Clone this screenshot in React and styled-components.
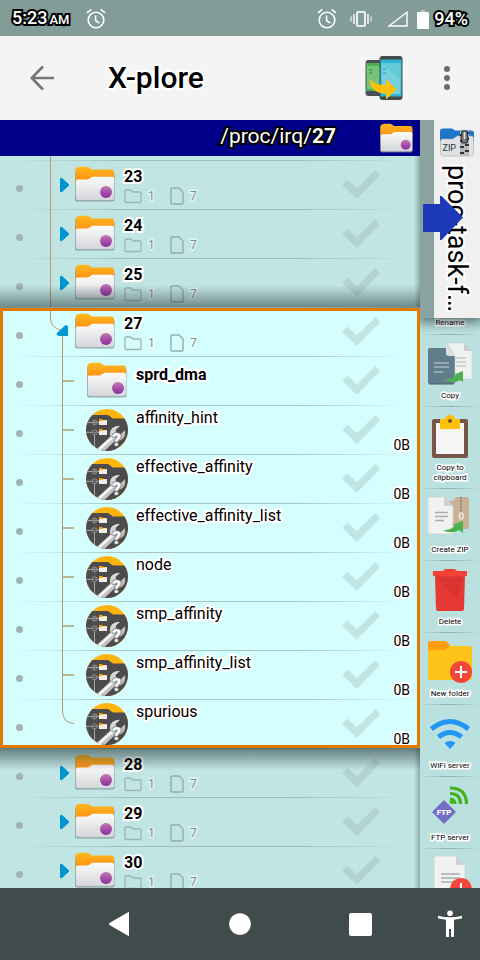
import React from "react";
import styled, { createGlobalStyle, css } from "styled-components";

const GlobalStyle = createGlobalStyle`
  *, *::before, *::after { box-sizing: border-box; }
  body { margin: 0; font-family: Roboto, "Noto Sans", sans-serif; color: #000; }
  button { border: 0; padding: 0; margin: 0; background: none; font: inherit; color: inherit; cursor: pointer; }
  svg { display: block; flex: none; }
  ul { list-style: none; margin: 0; padding: 0; }
`;

const whiteHalo = css`
  -webkit-text-stroke: 4px #fff;
  paint-order: stroke fill;
`;
const blackHalo = css`
  color: #fff;
  -webkit-text-stroke: 4px #000;
  paint-order: stroke fill;
`;

const Screen = styled.div`
  height: 100vh;
  display: flex;
  flex-direction: column;
  overflow: hidden;
`;

const StatusBar = styled.header`
  flex: none;
  height: 36px;
  padding: 2px 12px 0;
  display: flex;
  align-items: center;
  background: #829c98;
`;
const Clock = styled.time`
  ${blackHalo}
  font-size: 18px;
  font-weight: 500;
  line-height: 24px;
  margin-right: 17px;
  white-space: nowrap;
  small { font-size: 13px; margin-left: 2px; }
`;
const StatusIcons = styled.div`
  margin-left: auto;
  display: flex;
  align-items: center;
`;
const StatusIcon = styled.span`
  margin-right: ${(p) => p.$gap}px;
`;
const Percent = styled.span`
  ${blackHalo}
  font-size: 18px;
  font-weight: 500;
  line-height: 24px;
`;

const AppBar = styled.div`
  flex: none;
  height: 84px;
  padding: 0 3px 0 26px;
  display: flex;
  align-items: center;
  background: #f4f4f4;
`;
const BarButton = styled.button`
  display: flex;
  align-items: center;
  justify-content: center;
  width: ${(p) => p.$w}px;
  height: 48px;
  margin-left: ${(p) => p.$gap || 0}px;
`;
const Title = styled.h1`
  ${whiteHalo}
  flex: 1;
  margin: 0 0 0 50px;
  font-size: 30px;
  font-weight: 500;
  line-height: 36px;
`;

const Body = styled.div`
  flex: 1;
  min-height: 0;
  display: flex;
`;
const Pane = styled.main`
  flex: 1;
  min-width: 0;
  display: flex;
  flex-direction: column;
  background: #c0e5e3;
  overflow: hidden;
  position: relative;
  &::after {
    content: "";
    position: absolute;
    inset: 36px 0 0 auto;
    width: 6px;
    background: linear-gradient(to right, rgba(60, 90, 90, 0), rgba(60, 90, 90, 0.4));
    pointer-events: none;
  }
`;
const PathBar = styled.div`
  flex: none;
  height: 36px;
  padding: 0 6px 0 0;
  display: flex;
  align-items: center;
  justify-content: flex-end;
  gap: 44px;
  background: #00008b;
`;
const PathText = styled.span`
  ${blackHalo}
  font-size: 21px;
  line-height: 32px;
  margin-bottom: 4px;
`;
const Tree = styled.ul`
  flex: 1;
  min-height: 0;
  overflow: hidden;
  background: linear-gradient(#b59878, #b59878) 50px 0 / 1px 6px no-repeat;
`;
const LeadIn = styled.li`
  height: 4px;
`;
const Group = styled.ul`
  position: relative;
  z-index: 1;
  background: #d5fffe;
  &::before {
    content: "";
    position: absolute;
    z-index: -1;
    inset: -22px 0;
    background:
      linear-gradient(to bottom, rgba(25, 40, 40, 0), rgba(25, 40, 40, 0.5)) top / 100% 23px no-repeat,
      linear-gradient(to top, rgba(25, 40, 40, 0), rgba(25, 40, 40, 0.55)) bottom / 100% 22px no-repeat;
  }
  &::after {
    content: "";
    position: absolute;
    inset: 1px 0 0;
    border: 3px solid #e07b00;
    pointer-events: none;
  }
`;
const Row = styled.li`
  display: flex;
  height: 49px;
  background: linear-gradient(to right, rgba(150, 175, 178, 0) 3%, rgba(150, 175, 178, 0.75) 30%, rgba(150, 175, 178, 0.75) 70%, rgba(150, 175, 178, 0) 97%) top / 100% 1px no-repeat;
`;
const Bullet = styled.span`
  flex: none;
  width: 7px;
  height: 7px;
  margin: 25px 17px 0 16px;
  border-radius: 50%;
  background: #9fb3b2;
`;
const Expander = styled.button`
  flex: none;
  width: 35px;
`;
const Guide = styled.span`
  flex: none;
  width: 46px;
`;
const IconCell = styled.span`
  flex: none;
  width: ${(p) => (p.$child ? 50 : 49)}px;
  padding: ${(p) => (p.$file ? "4px 0 0" : p.$child ? "6px 0 0 1px" : "6px 0 0")};
`;
const Info = styled.div`
  flex: 1;
  min-width: 0;
  padding-top: ${(p) => p.$top}px;
`;
const Name = styled.div`
  ${whiteHalo}
  font-size: 16px;
  line-height: 20px;
  font-weight: ${(p) => (p.$bold ? 700 : 400)};
  white-space: nowrap;
`;
const Counts = styled.div`
  display: flex;
  align-items: center;
  height: 18px;
  font-size: 12px;
  line-height: 18px;
  color: #7d8f8f;
  span {
    width: 22px;
    padding-left: 6px;
    -webkit-text-stroke: 3px rgba(255, 255, 255, 0.55);
    paint-order: stroke fill;
  }
  svg + span + svg { margin-left: 6px; }
`;
const Check = styled.input`
  appearance: none;
  flex: none;
  width: 38px;
  height: 29px;
  margin: 10px 0 0;
  background: rgba(150, 170, 170, 0.3);
  clip-path: polygon(1% 52%, 14% 33%, 39% 63%, 88% 0, 100% 18%, 39% 100%);
  cursor: pointer;
  &:checked { background: #2e9b45; }
`;
const Size = styled.span`
  ${whiteHalo}
  flex: none;
  align-self: flex-end;
  width: 40px;
  padding-right: 10px;
  text-align: right;
  font-size: 14px;
  line-height: 18px;
`;

const Side = styled.aside`
  flex: none;
  width: 60px;
  display: flex;
  flex-direction: column;
  background: #bae1df;
`;
const TabStrip = styled.div`
  position: relative;
  z-index: 1;
  flex: none;
  height: 198px;
  padding-left: 14px;
  background: #8aa3a1;
  box-shadow: 0 3px 10px 2px rgba(30, 50, 50, 0.6);
  clip-path: inset(0 0 -14px 0);
`;
const OtherTab = styled.button`
  width: 100%;
  height: 100%;
  padding-top: 8px;
  display: flex;
  flex-direction: column;
  align-items: center;
  gap: 8px;
  background: #f0f0f0;
`;
const TabName = styled.span`
  ${whiteHalo}
  writing-mode: vertical-rl;
  font-size: 27px;
  line-height: 32px;
  white-space: nowrap;
`;
const SwitchArrow = styled.svg`
  position: absolute;
  left: 3px;
  top: 75px;
`;
const Tools = styled.nav`
  flex: 1;
  min-height: 0;
  overflow: hidden;
  display: flex;
  flex-direction: column;
`;
const Tool = styled.button`
  flex: none;
  display: flex;
  flex-direction: column;
  align-items: center;
  gap: 5px;
  padding: ${(p) => (p.$cut ? "0 0 6px" : "8px 0 5px")};
  background: ${(p) => (p.$cut ? "none" : "linear-gradient(to right, rgba(130,160,160,0), rgba(130,160,160,.8), rgba(130,160,160,0)) top / 100% 1px no-repeat")};
`;
const ToolLabel = styled.span`
  -webkit-text-stroke: 3px #fff;
  paint-order: stroke fill;
  font-size: 8px;
  line-height: 10px;
  max-width: 48px;
  text-align: center;
`;

const NavBar = styled.footer`
  flex: none;
  height: 72px;
  display: grid;
  grid-template-columns: 1fr 2fr 2fr 2fr 1fr;
  background: #3f4c4b;
`;
const NavButton = styled.button`
  display: flex;
  align-items: center;
  justify-content: center;
  grid-column: ${(p) => p.$col};
`;

const Alarm = () => (
  <svg width="20" height="22" viewBox="0 0 20 22" fill="none" stroke="#fff" strokeWidth="1.6">
    <circle cx="10" cy="12" r="7.8" />
    <path d="M9.6 7.5v5l3.6 2.6M1 4.8l4.3-3.4M19 4.8l-4.3-3.4" />
  </svg>
);
const Vibrate = () => (
  <svg width="22" height="18" viewBox="0 0 22 18" fill="none" stroke="#fff">
    <rect x="7" y="2" width="8" height="14" rx="1" strokeWidth="2" opacity=".85" />
    <path d="M4 4v10M18 4v10" strokeWidth="2" opacity=".7" />
    <path d="M1 6.500v5M21 6.500v5" strokeWidth="1.500" opacity=".7" />
  </svg>
);
const Signal = () => (
  <svg width="21" height="16" viewBox="0 0 21 16" fill="none" stroke="#fff" strokeWidth="1.4">
    <path d="M2 15 20 1.300V15z" />
  </svg>
);
const Battery = () => (
  <svg width="12" height="19" viewBox="0 0 12 19">
    <path d="M4 0h4v2H4z" fill="#fff" opacity=".45" />
    <rect y="2" width="12" height="17" rx="1" fill="#fff" />
  </svg>
);
const BackArrow = () => (
  <svg width="32" height="28" viewBox="0 0 32 28" fill="none" stroke="#757575" strokeWidth="2.6">
    <path d="M17 2.500 5.800 14 17 25.500M6 14h22" />
  </svg>
);
const Phones = () => (
  <svg width="38" height="46" viewBox="0 0 38 46">
    <rect x="0.500" y="5" width="22" height="36" rx="3" fill="#4c5052" />
    <path d="M1.500 8h17v28h-17z" fill="#74c47a" />
    <path d="M1.500 8h17v3h-17zM1.500 34h17v2h-17z" fill="#4caf50" />
    <path d="M4 14h3v2H4zM4 17h3v2H4z" fill="#56a45b" />
    <rect x="14.500" y="1" width="23" height="44" rx="3" fill="#454a4c" />
    <path d="M15.500 4.500h21v37h-21z" fill="#29b8d2" />
    <path d="M16.500 8h19v31h-19z" fill="#75d1dd" />
    <path d="m16.500 8 19 18V8z" fill="#63cad8" />
    <path d="M18 13h3v2h-3zM18 17h3v2h-3z" fill="#55b5c4" />
    <path d="M4.500 23.500c3 5 8 7 16.500 6V24l10.500 10.500L21 44.500v-6C12 38.500 4 34 4.500 23.500z" fill="#ffc107" />
  </svg>
);
const More = () => (
  <svg width="8" height="26" viewBox="0 0 8 26" fill="#6e6e6e">
    <circle cx="4" cy="4" r="3" /><circle cx="4" cy="13" r="3" /><circle cx="4" cy="22" r="3" />
  </svg>
);

const Folder = ({ width = 41, height = 37 }) => (
  <svg width={width} height={height} viewBox="1 0 41 37">
    <defs>
      <linearGradient id="fo" x2="0" y2="1"><stop stopColor="#ffb71c" /><stop offset="1" stopColor="#ff8a18" /></linearGradient>
      <linearGradient id="fw" x2="0" y2="1"><stop stopColor="#fcfcfc" /><stop offset="1" stopColor="#d3d5d8" /></linearGradient>
      <linearGradient id="fp" x2="0" y2="1"><stop stopColor="#c178ae" /><stop offset="1" stopColor="#8d2ca0" /></linearGradient>
    </defs>
    <path d="M1 5v28q0 2.500 2.500 2.500h34.500q2.500 0 2.500-2.500V7z" fill="#788b8d" opacity=".75" />
    <path d="M1.500 18V3.500Q1.500 1.500 3.500 1.500L6 .8h8l4 2.700h19.500q2.500 0 2.500 2V18z" fill="url(#fo)" />
    <path d="M1.800 15.500q.2-2 2-2H14l4.500-2.800h19q2.500 0 2.500 2V32q0 2.300-2.300 2.300H4.200Q1.800 34.300 1.800 32z" fill="url(#fw)" />
    <circle cx="32" cy="26" r="6" fill="url(#fp)" />
  </svg>
);
const MiniFolder = ({ y }) => (
  <g transform={`translate(13 ${y})`}>
    <path d="M0 0h3l1 1h4v3H0z" fill="#ffa000" />
    <path d="M0 2h3l1-.8h4V6H0z" fill="#f2eee6" />
  </g>
);
const SystemFile = () => (
  <svg width="42" height="42" viewBox="0 0 42 42">
    <defs>
      <clipPath id="disc"><circle cx="21" cy="21" r="21" /></clipPath>
      <linearGradient id="steel" x2="1" y2="1"><stop stopColor="#fff" /><stop offset="1" stopColor="#999" /></linearGradient>
    </defs>
    <g clipPath="url(#disc)">
      <rect width="42" height="42" fill="#ffb40d" />
      <path d="M0 6h22l5 3.600h15V42H0z" fill="#4c4b4e" />
      <path d="M0 13.500h13M0 23.300h13M8.500 25v13" stroke="#a5a5a5" fill="none" />
      <g fill="#4c4b4e" stroke="#a5a5a5" strokeWidth=".8">
        <circle cx="8.500" cy="13.500" r="2.500" /><circle cx="8.500" cy="23.300" r="2.500" />
        <path d="M6.500 13.500h4M8.500 11.500v4M7 23.300h3" />
      </g>
      <MiniFolder y={10} />
      <MiniFolder y={20} />
      <path d="M8 42 24 27.500C22 21 27 15.500 35 16.500L30 21l1 3.500 3.500.5 4.500-4.500c2.500 7-3 13-9.500 11.500L18 43z" fill="url(#steel)" stroke="#303030" strokeWidth=".6" />
      <path d="M12 41.500 27 28" stroke="#fbfbfb" strokeWidth="2" />
      <text x="26" y="37" fontSize="18" fontWeight="900" fill="#fafafa" stroke="#777" strokeWidth="1.500" paintOrder="stroke" fontFamily="Roboto, sans-serif">?</text>
    </g>
  </svg>
);

const LINE = "#b59878";
const ClosedGuide = ({ line }) => (
  <svg width="35" height="49" viewBox="0 0 35 49">
    {line && <path d="M10.500 0v49" stroke={LINE} />}
    <path d="M20.500 19q0-1.500 1.500-.5l7 6.500-7 6.500q-1.500 1-1.500-.5z" fill="#0095cf" stroke="#0095cf" strokeLinejoin="round" />
  </svg>
);
const OpenGuide = () => (
  <svg width="35" height="49" viewBox="0 0 35 49">
    <path d="M10.500 0v12q1 9 10 11" stroke={LINE} fill="none" />
    <path d="M22.500 26v23" stroke={LINE} />
    <path d="M18 25.500 25 19q2.500-1.500 2.500 1v8.500h-9q-3-1-.5-3z" fill="#0095cf" stroke="#0095cf" strokeLinejoin="round" />
  </svg>
);
const ChildGuide = ({ last }) => (
  <svg width="46" height="49" viewBox="0 0 46 49">
    {last ? (
      <path d="M22.500 0v13q1 11 11.500 11.500" stroke={LINE} fill="none" />
    ) : (
      <>
        <path d="M22.500 0v49" stroke={LINE} />
        <path d="M23 25h11" stroke="#b9b799" strokeWidth="2" />
      </>
    )}
  </svg>
);
const FolderOutline = () => (
  <svg width="18" height="15" viewBox="0 0 18 15" fill="none" stroke="#9ab5b5" strokeWidth="1.300">
    <path d="M1 12.500V2q0-1 1-1h4.500L9 3h7q1 0 1 1v8.500q0 1-1 1H2q-1 0-1-1z" />
  </svg>
);
const PageOutline = () => (
  <svg width="14" height="18" viewBox="0 0 14 18" fill="none" stroke="#93adad" strokeWidth="1.400">
    <path d="M1 16V2q0-1 1-1h7l4 4v11q0 1-1 1H2q-1 0-1-1z" />
  </svg>
);

const ZipFolder = () => (
  <svg width="34" height="29" viewBox="0 0 34 29">
    <path d="M0 13V3q0-2.500 3-2.500h9l3 2h16q3 0 3 3V13z" fill="#1d75cc" />
    <path d="M.5 13q0-2 2-2H13l4-3h14.500q2 0 2 2V25q0 3-3 3h-27q-3 0-3-3z" fill="#dfe2e4" stroke="#aaa" strokeWidth=".6" />
    <text x="2.500" y="23" fontSize="9" fill="#333" fontFamily="Roboto, sans-serif">ZIP</text>
    <path d="M20 3h9v25h-9z" fill="#b8bcbf" />
    <path d="M20 7h4M25 5h4M20 13h4M25 11h4M20 19h4M25 17h4M20 25h4M25 23h4" stroke="#333" strokeWidth="2" />
    <path d="M22 3h5l1 7-1 5h-5l-1-5z" fill="#777" stroke="#222" />
    <path d="M24.500 4v7" stroke="#e5e5e5" strokeWidth="1.500" />
  </svg>
);
const Art = ({ children }) => (
  <svg width="44" height="44" viewBox="0 0 44 44">{children}</svg>
);
const Page = ({ x, y, w, h }) => (
  <g transform={`translate(${x} ${y})`}>
    <path d={`M1 0h${w - 11}l9 9v${h - 10}q0 1-1 1H1q-1 0-1-1V1q0-1 1-1z`} fill="#f0f1f1" stroke="#c9cccc" strokeWidth=".6" />
    <path d={`M${w - 10} 0v8q0 1 1 1h8z`} fill="#cfd1d1" />
    <path d={`M7 ${h / 2 - 3}h${w - 13}M7 ${h / 2 + 1}h${w - 13}M7 ${h / 2 + 5}h${w - 17}`} stroke="#a9adad" strokeWidth="1.300" />
  </g>
);
const Plus = ({ cx, cy }) => (
  <g>
    <circle cx={cx} cy={cy} r="11" fill="#f4473a" />
    <path d={`M${cx - 6} ${cy}h12M${cx} ${cy - 6}v12`} stroke="#fff" strokeWidth="2" />
  </g>
);
const art = {
  copy: (
    <Art>
      <path d="M2 6h18l7 9v25q0 2-2 2H2q-2 0-2-2V8q0-2 2-2z" fill="#607d8b" />
      <path d="M1 42h25" stroke="#455d68" />
      <path d="M6 21h15M6 25h15M6 30h9" stroke="#a6b8c0" strokeWidth="1.500" />
      <path d="M19 1h17l8 8v27q0 1-1 1H27V14z" fill="#f0f1f1" stroke="#c9cccc" strokeWidth=".6" />
      <path d="M18 2v9q0 3 3 3h6z" fill="#dce1e3" /><path d="M36 1v7q0 1 1 1h7z" fill="#ccc" />
      <path d="M28 16h10M28 20h10M28 24h10" stroke="#b4b8b8" />
      <path d="M17 38c6-1 9-3 11-5h-3l10-4v11l-3-2c-5 3-10 3-15 0z" fill="#4caf50" />
    </Art>
  ),
  clip: (
    <Art>
      <rect x="4" y="5" width="36" height="39" rx="2" fill="#795548" />
      <path d="M8 9h28v31H8z" fill="#f5f5f5" />
      <path d="M12 5h5q1-4 5-4t5 4h5v10H12z" fill="#ffc107" /><circle cx="22" cy="7" r="2" fill="#6d4c41" />
    </Art>
  ),
  zip: (
    <Art>
      <path d="M16 5h9l3-4h11q2 0 2 2v28q0 2-2 2H16z" fill="#c9b293" />
      <path d="M33 1v17" stroke="#8c8c8c" strokeWidth="2" strokeDasharray="2 1" />
      <rect x="31.500" y="17" width="3.500" height="6" rx="1.500" fill="none" stroke="#eee" strokeWidth="1.300" />
      <Page x={0} y={1} w={26} h={37} />
      <path d="M15 34c7 0 10-2 12-5h-3l11-4v12l-4-3c-5 3-11 3-16 0z" fill="#4caf50" />
    </Art>
  ),
  bin: (
    <Art>
      <path d="M7 8h30l-1 33q0 2-2 2H10q-2 0-2-2z" fill="#e53935" />
      <path d="M8 9h28L29 30z" fill="#d6322f" opacity=".7" />
      <path d="M5 3h10l2-2h10l2 2h10v5H5z" fill="#f44336" />
    </Art>
  ),
  folder: (
    <Art>
      <path d="M0 3q0-2 2-2h16l5 5h19q2 0 2 2v31H0z" fill="#ff9f10" />
      <path d="M0 12q0-2 2-2h15l5-4h20q2 0 2 2v30q0 2-2 2H2q-2 0-2-2z" fill="#ffc41a" />
      <Plus cx={33} cy={32} />
    </Art>
  ),
  wifi: (
    <Art>
      <g fill="none" stroke="#2196f3" strokeWidth="5">
        <path d="M3.500 17q18.500-15 37 0" /><path d="M10.500 25q11.500-9 23 0" />
      </g>
      <path d="M16.500 31q5.500-4 11 0L22 37z" fill="#2196f3" />
    </Art>
  ),
  ftp: (
    <Art>
      <g fill="none" stroke="#43b21a" strokeWidth="3.200">
        <path d="M22 15q5 0 5 5M22 9.500q10.500 0 10.500 10.500M22 4q16.500 0 16.500 16" />
      </g>
      <circle cx="23.500" cy="18" r="2" fill="#43b21a" />
      <path d="M16 17 27 28 16 39 5 28z" fill="#7370c6" stroke="#7370c6" strokeWidth="1.500" strokeLinejoin="round" />
      <text x="16" y="31" fontSize="8" fontWeight="900" fill="#fff" textAnchor="middle" fontFamily="Roboto, sans-serif">FTP</text>
    </Art>
  ),
  newFile: (
    <Art>
      <Page x={6} y={0} w={32} h={42} />
      <Plus cx={33} cy={33} />
    </Art>
  ),
};

const tools = [
  ["Copy", "copy"],
  ["Copy to clipboard", "clip"],
  ["Create ZIP", "zip"],
  ["Delete", "bin"],
  ["New folder", "folder"],
  ["WiFi server", "wifi"],
  ["FTP server", "ftp"],
];
const files = ["affinity_hint", "effective_affinity", "effective_affinity_list", "node", "smp_affinity", "smp_affinity_list", "spurious"];

const FolderRow = ({ name, open, line }) => (
  <Row>
    <Bullet />
    <Expander aria-label={`Toggle ${name}`} aria-expanded={!!open}>{open ? <OpenGuide /> : <ClosedGuide line={line} />}</Expander>
    <IconCell><Folder /></IconCell>
    <Info $top={7}>
      <Name $bold>{name}</Name>
      <Counts>
        <FolderOutline /><span>1</span>
        <PageOutline /><span>7</span>
      </Counts>
    </Info>
    <Check type="checkbox" aria-label={`Select ${name}`} />
    <Size />
  </Row>
);
const ChildRow = ({ name, folder, last }) => (
  <Row>
    <Bullet />
    <Guide><ChildGuide last={last} /></Guide>
    <IconCell $child $file={!folder}>{folder ? <Folder /> : <SystemFile />}</IconCell>
    <Info $top={folder ? 9 : 3}><Name $bold={folder}>{name}</Name></Info>
    <Check type="checkbox" aria-label={`Select ${name}`} />
    <Size>{folder ? "" : "0B"}</Size>
  </Row>
);

export default function App() {
  return (
    <Screen>
      <GlobalStyle />
      <StatusBar>
        <Clock>5:23<small>AM</small></Clock>
        <Alarm />
        <StatusIcons>
          <StatusIcon $gap={13}><Alarm /></StatusIcon>
          <StatusIcon $gap={15}><Vibrate /></StatusIcon>
          <StatusIcon $gap={9}><Signal /></StatusIcon>
          <StatusIcon $gap={5}><Battery /></StatusIcon>
          <Percent>94%</Percent>
        </StatusIcons>
      </StatusBar>
      <AppBar>
        <BarButton $w={32} aria-label="Back"><BackArrow /></BarButton>
        <Title>X-plore</Title>
        <BarButton $w={38} aria-label="Transfer between devices"><Phones /></BarButton>
        <BarButton $w={60} $gap={14} aria-label="More options"><More /></BarButton>
      </AppBar>
      <Body>
        <Pane>
          <PathBar>
            <PathText>/proc/irq/<b>27</b></PathText>
            <Folder width={34} height={31} />
          </PathBar>
          <Tree>
            <LeadIn />
            {["23", "24", "25"].map((n) => <FolderRow key={n} name={n} line />)}
            <li>
              <Group>
                <FolderRow name="27" open />
                <ChildRow name="sprd_dma" folder />
                {files.map((f, i) => <ChildRow key={f} name={f} last={i === files.length - 1} />)}
              </Group>
            </li>
            {["28", "29", "30"].map((n) => <FolderRow key={n} name={n} />)}
          </Tree>
        </Pane>
        <Side>
          <TabStrip>
            <OtherTab>
              <ZipFolder />
              <TabName>proc-task-f…</TabName>
            </OtherTab>
            <SwitchArrow width="41" height="46" viewBox="0 0 41 46">
              <path d="M1 9h16V1h1.500L40 22.500 18.500 45H17v-8H1q-1 0-1-1V10q0-1 1-1z" fill="#1c3ab8" />
            </SwitchArrow>
          </TabStrip>
          <Tools>
            <Tool $cut><ToolLabel>Rename</ToolLabel></Tool>
            {tools.map(([label, icon]) => (
              <Tool key={label}>{art[icon]}<ToolLabel>{label}</ToolLabel></Tool>
            ))}
            <Tool aria-label="New text file">{art.newFile}</Tool>
          </Tools>
        </Side>
      </Body>
      <NavBar>
        <NavButton $col={2} aria-label="Back">
          <svg width="24" height="26" viewBox="0 0 24 26"><path d="M1.500 12 20 1.200q1-.4 1 .6v22.400q0 1-1 .6L1.500 14q-1-1 0-2z" fill="#fff" /></svg>
        </NavButton>
        <NavButton $col={3} aria-label="Home">
          <svg width="22" height="22" viewBox="0 0 22 22"><circle cx="11" cy="11" r="10.800" fill="#fff" /></svg>
        </NavButton>
        <NavButton $col={4} aria-label="Recent apps">
          <svg width="23" height="23" viewBox="0 0 23 23"><rect width="23" height="23" rx="2" fill="#fff" /></svg>
        </NavButton>
        <NavButton $col={5} aria-label="Accessibility">
          <svg width="24" height="28" viewBox="0 0 24 28" fill="#fff">
            <circle cx="12" cy="3.200" r="2.800" />
            <path d="M0 5.800q12 3 24 0v2.600l-8 1.400V27h-3v-8h-2v8H8V9.800L0 8.400z" />
          </svg>
        </NavButton>
      </NavBar>
    </Screen>
  );
}
